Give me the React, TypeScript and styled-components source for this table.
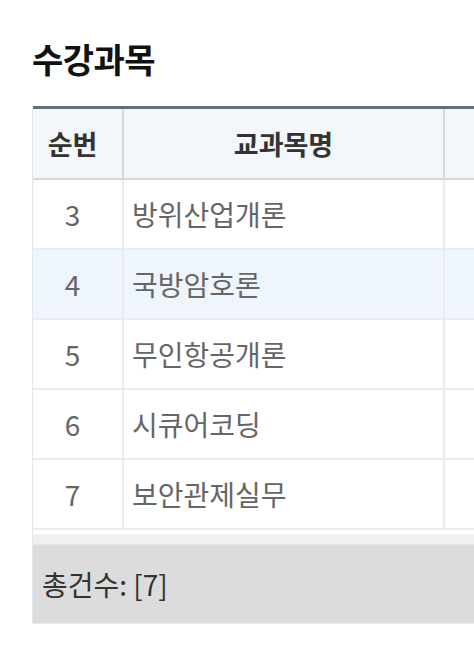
import styled, { createGlobalStyle } from "styled-components";

const GlobalStyle = createGlobalStyle`
  html, body {
    margin: 0;
    padding: 0;
    background: #fff;
    overflow: hidden;
  }
  body {
    font-family: "Noto Sans CJK KR", "Noto Sans", sans-serif;
  }
`;

const Page = styled.div`
  padding: 37px 0 0 32px;
  width: 700px;
`;

const Title = styled.h2`
  margin: 0 0 25px 0;
  font-size: 34px;
  font-weight: 700;
  line-height: 44px;
  color: #111;
  letter-spacing: -0.5px;
`;

const Scroller = styled.div`
  border-left: 1px solid #e4e6e9;
`;

const StyledTable = styled.table`
  width: 100%;
  border-collapse: collapse;
  border-top: 3px solid #646e7a;
  table-layout: fixed;
`;

const ColumnHeader = styled.th<{ $w?: number; $narrow?: boolean }>`
  width: ${(p) => (p.$w ? `${p.$w}px` : "auto")};
  height: 69px;
  padding: 0 ${(p) => (p.$narrow ? 10 : 0)}px 0 0;
  background: #f3f6fa;
  color: #333;
  font-size: 27px;
  font-weight: 700;
  text-align: center;
  border-right: 2px solid #d3d9df;
  border-bottom: 2px solid #d5d9de;
`;

const Row = styled.tr<{ $active?: boolean }>`
  background: ${(p) => (p.$active ? "#eef5fd" : "#fff")};
`;

const Cell = styled.td<{ $center?: boolean }>`
  height: 68px;
  padding: ${(p) => (p.$center ? "0 10px 0 0" : "0 0 0 8px")};
  color: #666;
  font-size: 28px;
  text-align: ${(p) => (p.$center ? "center" : "left")};
  border-right: 2px solid #ebebeb;
  border-bottom: 2px solid #ebebeb;
`;

const Track = styled.div`
  margin-top: 4px;
  height: 10px;
  background: #f0f0f0;
  border-bottom: 1px solid #e2e6ea;
`;

const Footer = styled.div`
  height: 78px;
  display: flex;
  align-items: center;
  padding-left: 9px;
  background: #dcdcdc;
  border-bottom: 1px solid #ececec;
  color: #333;
  font-size: 28px;
`;

const courses = [
  { no: 3, name: "방위산업개론" },
  { no: 4, name: "국방암호론" },
  { no: 5, name: "무인항공개론" },
  { no: 6, name: "시큐어코딩" },
  { no: 7, name: "보안관제실무" },
];

const total = 7;

const App = () => (
  <>
    <GlobalStyle />
    <Page>
      <Title>수강과목</Title>
      <Scroller>
        <StyledTable>
          <thead>
            <tr>
              <ColumnHeader $w={79} $narrow>순번</ColumnHeader>
              <ColumnHeader $w={319}>교과목명</ColumnHeader>
              <ColumnHeader />
            </tr>
          </thead>
          <tbody>
            {courses.map((c) => (
              <Row key={c.no} $active={c.no === 4}>
                <Cell $center>{c.no}</Cell>
                <Cell>{c.name}</Cell>
                <Cell />
              </Row>
            ))}
          </tbody>
        </StyledTable>
        <Track />
        <Footer>총건수: [{total}]</Footer>
      </Scroller>
    </Page>
  </>
);

export default App;
